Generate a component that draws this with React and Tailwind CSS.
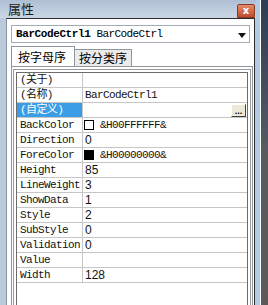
import React from 'react';

const rows = [
  { name: '(关于)' },
  { name: '(名称)', value: 'BarCodeCtrl1', mono: true },
  { name: '(自定义)', selected: true, button: true },
  { name: 'BackColor', value: '&H00FFFFFF&', swatch: 'bg-white', mono: true },
  { name: 'Direction', value: '0' },
  { name: 'ForeColor', value: '&H00000000&', swatch: 'bg-black', mono: true },
  { name: 'Height', value: '85' },
  { name: 'LineWeight', value: '3' },
  { name: 'ShowData', value: '1' },
  { name: 'Style', value: '2' },
  { name: 'SubStyle', value: '0' },
  { name: 'Validation', value: '0' },
  { name: 'Value', value: '' },
  { name: 'Width', value: '128' },
];

const mono = "font-['Liberation_Mono','Noto_Sans_CJK_SC',monospace]";

const PropRow = ({ row }) => (
  <div className="flex h-[15px] border-b border-[#c6c6c6]">
    <div
      className={`w-[66px] shrink-0 border-r border-[#c6c6c6] pl-[3px] text-[11px] leading-[14px] tracking-[-0.6px] ${mono} ${row.selected ? 'bg-[#3a9de6] text-white' : 'text-[#111]'}`}
    >
      {row.name}
    </div>
    <div className="flex flex-1 items-center pl-[2px] text-[#111]">
      {row.swatch && <div className={`ml-[-1px] mr-[6px] h-[10px] w-[10px] border border-black ${row.swatch}`} />}
      {row.mono ? (
        <span className={`text-[11px] leading-[14px] tracking-[-0.6px] ${mono}`}>{row.value}</span>
      ) : (
        <span className="font-['Liberation_Sans',sans-serif] text-[12px] leading-[14px]">{row.value}</span>
      )}
      {row.button && (
        <div className="ml-auto mr-[1px] flex h-[13px] w-[15px] items-end justify-center border border-t-white border-l-white border-r-[#404040] border-b-[#404040] bg-[#ece9d8] pb-[2px] text-[9px] font-bold leading-[6px] text-black">
          ...
        </div>
      )}
    </div>
  </div>
);

export default function App() {
  return (
    <div className="flex h-[305px] w-[268px] overflow-hidden bg-white">
      {/* window */}
      <div className="flex w-[256px] flex-col bg-[#bccbdc]">
        <div className="flex h-[18px] shrink-0 items-end justify-between bg-gradient-to-b from-[#aebfd3] to-[#cbd7e5] pl-[8px]">
          <span className="pb-[2px] font-['Noto_Sans_CJK_SC',sans-serif] text-[13px] leading-[14px] text-[#1c1c1c]">属性</span>
          <div className="mr-[1px] flex h-[14px] w-[18px] items-center justify-center rounded-t-[2px] border border-[#8a3a24] bg-gradient-to-b from-[#e58a6c] to-[#c04a2c] font-['DejaVu_Sans',sans-serif] text-[10px] font-bold leading-none text-white">
            x
          </div>
        </div>
        <div className="flex flex-1 pl-[6px] pr-[1px]">
          <div className="flex flex-1 flex-col border-t border-r border-l border-t-[#2d2d2d] border-r-[#2d2d2d] border-l-[#8494a6] bg-white">
            {/* combo */}
            <div className="mx-[4px] mt-[6px] flex h-[18px] items-center border border-[#a3abb5] pl-[4px] pr-[2px]">
              <span className={`text-[11px] font-bold leading-[14px] tracking-[-0.4px] text-black ${mono}`}>BarCodeCtrl1</span>
              <span className={`ml-[6px] text-[11px] leading-[14px] tracking-[-0.6px] text-black ${mono}`}>BarCodeCtrl</span>
              <svg className="ml-auto mr-[1px] mt-[3px]" width="8" height="5" viewBox="0 0 8 5">
                <path d="M0 0h8L4 5z" fill="#111" />
              </svg>
            </div>
            {/* tabs */}
            <div className="ml-[4px] mt-[3px] flex items-end">
              <div className="h-[20px] w-[64px] border border-b-0 border-[#8e979e] bg-white pl-[6px] font-['Noto_Sans_CJK_SC',sans-serif] text-[12px] leading-[19px] text-black">
                按字母序
              </div>
              <div className="h-[17px] w-[57px] border border-l-0 border-b-0 border-[#8e979e] bg-[#ebebeb] pl-[4px] font-['Noto_Sans_CJK_SC',sans-serif] text-[12px] leading-[16px] text-black">
                按分类序
              </div>
            </div>
            {/* tab page */}
            <div className="ml-[4px] mr-[1px] flex flex-1 flex-col border border-b-0 border-[#8e979e] pl-[1px] pr-[1px] pt-[2px]">
              <div className="flex flex-1 flex-col border border-b-0 border-[#9a9a9a] p-[2px] pb-0">
                <div className="flex-1 border border-b-0 border-[#6b6b6b]">
                  {rows.map((row) => (
                    <PropRow key={row.name} row={row} />
                  ))}
                </div>
              </div>
            </div>
          </div>
        </div>
      </div>
      {/* desktop edge */}
      <div className="w-[4px] bg-[#b2cae2]" />
      <div className="w-[1px] bg-white" />
      <div className="flex-1 bg-gradient-to-b from-[#2f3d55] via-[#585c61] to-[#5a5a5a]" />
    </div>
  );
}
